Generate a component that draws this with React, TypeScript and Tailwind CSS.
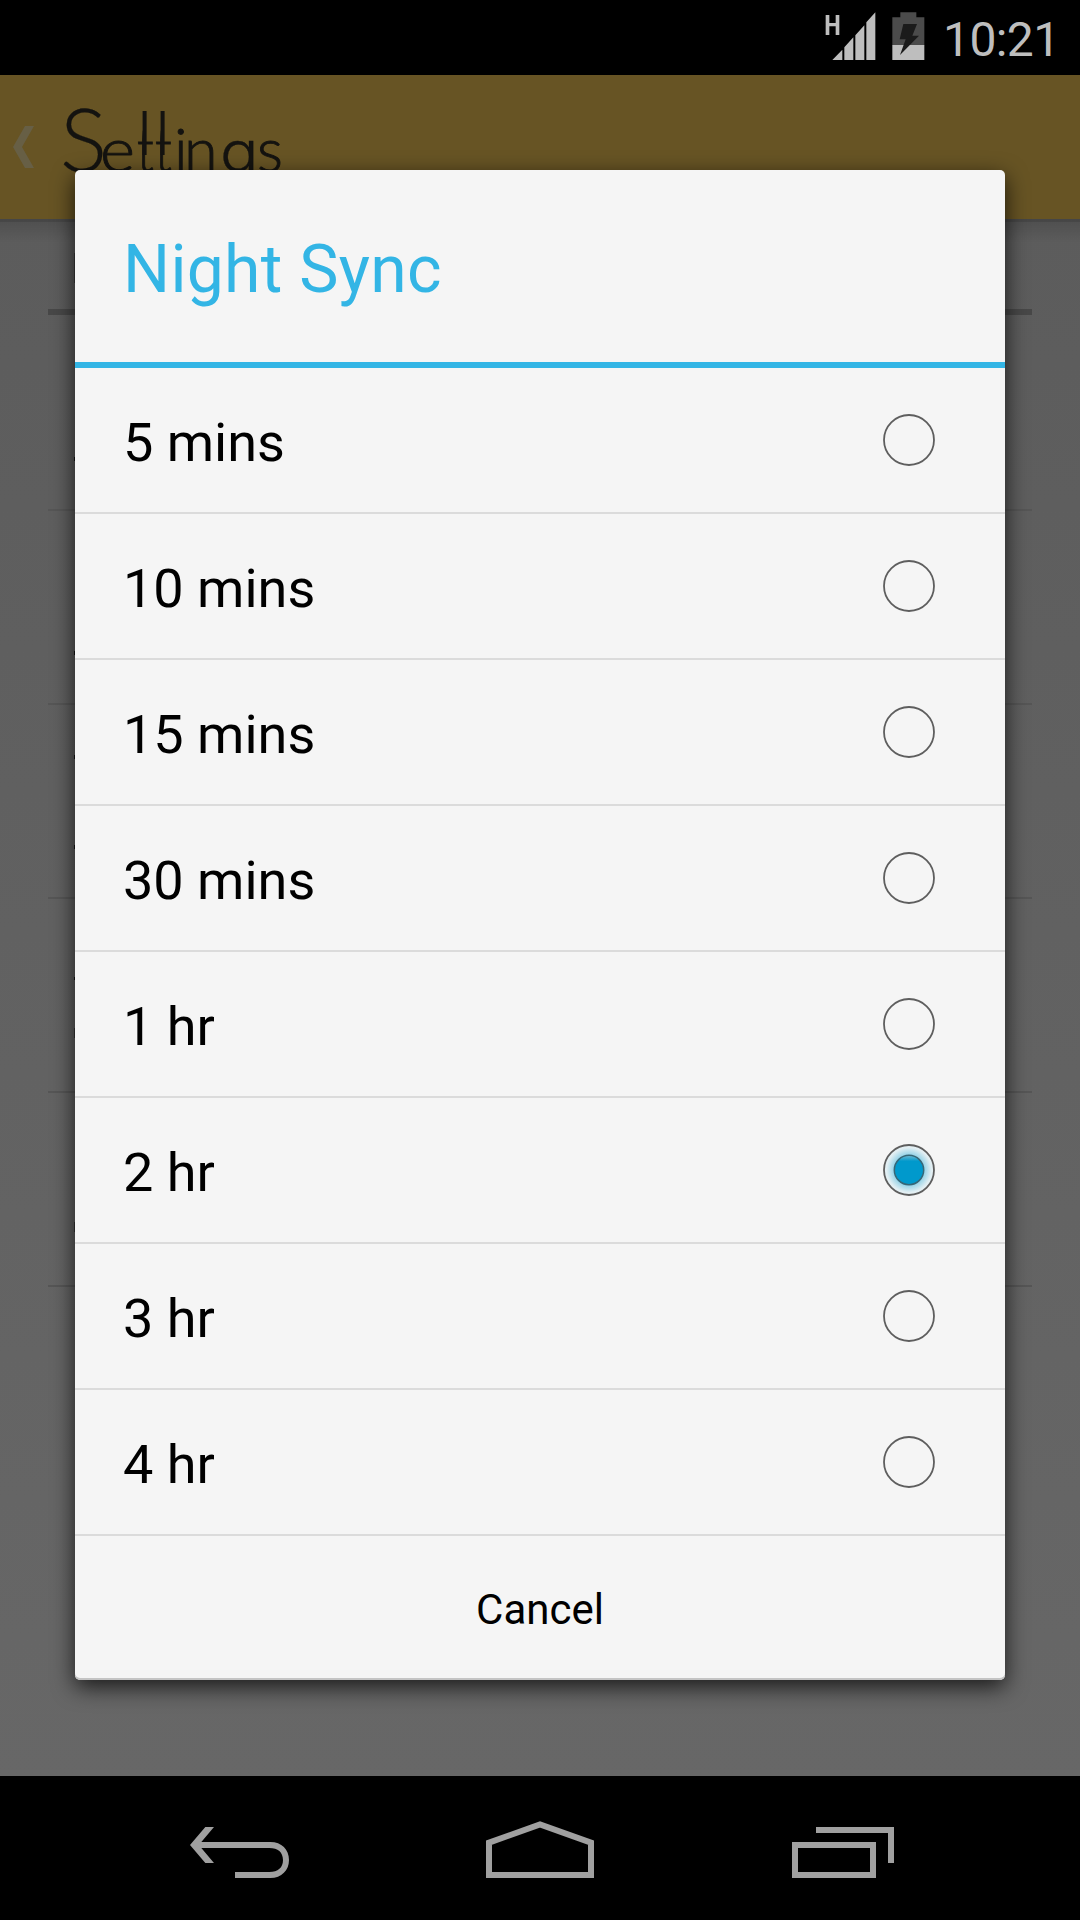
import React, { useState } from 'react';
import clsx from 'clsx';

const options = ['5 mins', '10 mins', '15 mins', '30 mins', '1 hr', '2 hr', '3 hr', '4 hr'];

function StatusBar() {
  return (
    <header className="flex h-[75px] justify-end bg-black pr-[23px] text-[#bebebe]">
      <svg className="h-[75px] w-[100px]" viewBox="134 0 300 225" fill="currentColor">
        <path d="M136 45h11v24h19V45h11v60h-11V79h-19v26h-11z" />
        <path d="M156 180 186 149V180zM192 142 219 112V180H192zM225 106 252 76V180H225zM258 67 285 37V180H258z" />
        <path fill="#4b4b4b" d="M360 37h48v15h24v84h-96V52h24z" />
        <path d="M336 135h96v45h-96z" />
        <path fill="#1b1b1b" d="M369 72h41l-14 35h20l-57 58 17-47h-18z" />
      </svg>
      <div className="ml-[18px] w-[114px] pr-px text-right text-[48px] leading-[79px] tracking-[-0.6px] whitespace-nowrap">10:21</div>
    </header>
  );
}

function TallT({ className }: { className: string }) {
  return (
    <span className={clsx('relative origin-left scale-x-80', className)}>
      t
      <i className="absolute top-[22px] left-[6.5px] h-[44px] w-[5.5px] bg-[#141310]" />
    </span>
  );
}

function ActionBar() {
  return (
    <div className="flex h-[144px] bg-[#675424]">
      <svg className="mt-[51px] ml-[13px] h-[42px] w-[21px]" viewBox="0 0 21 42">
        <path d="M12 0h9L9 21l12 21h-9L0 21z" fill="#675f45" />
      </svg>
      <h1 className="ml-[26px] flex h-[120px] items-baseline pt-[3px] text-[61px] leading-[120px] font-light text-[#141310] [font-family:Lato,sans-serif] [-webkit-text-stroke:0.9px_#141310]">
        <span className="w-[40px] text-[88px] tracking-[-9px] [-webkit-text-stroke:0.3px_#141310]">S</span>
        <span className="w-[37px] origin-left scale-x-110">e</span>
        <TallT className="w-[18px]" />
        <TallT className="w-[19px]" />
        <span className="w-[10px]">i</span>
        <span className="w-[36px]">n</span>
        <span className="w-[37px] origin-left scale-x-112 text-[57px] [font-family:Inter,sans-serif] [-webkit-text-stroke:0.3px_#141310]">g</span>
        <span>s</span>
      </h1>
    </div>
  );
}

// slivers of the preference labels that stick out past the dialog's left edge
function Sliver({ className }: { className: string }) {
  return <i className={clsx('absolute left-[74px] w-px', className)} />;
}

function Preferences() {
  return (
    <div className="relative flex-1 bg-linear-to-b from-[#5c5c5c] to-[#676767] px-[48px]">
      <div className="absolute inset-x-0 top-0 h-[24px] bg-linear-to-b from-black/15 to-transparent" />
      <div className="absolute inset-x-0 top-0 h-[3px] bg-black/10" />
      <div className="mb-[2px] h-[96px] border-b-[6px] border-[#484848]" />
      {[0, 1, 2, 3, 4].map((n) => (
        <div key={n} className="h-[194px] border-b-2 border-[#565656]" />
      ))}
      <Sliver className="top-[34px] h-[30px] bg-[#3c3c3c]" />
      <Sliver className="top-[238px] h-[4px] bg-[#151515]" />
      <Sliver className="top-[432px] h-[4px] bg-[#151515]" />
      <Sliver className="top-[536px] h-[4px] bg-[#151515]" />
      <Sliver className="top-[626px] h-[4px] bg-[#151515]" />
      <Sliver className="top-[758px] h-[3px] bg-[#151515]" />
      <Sliver className="top-[809px] h-[10px] bg-[#383838]" />
      <Sliver className="top-[1003px] h-[10px] bg-[#383838]" />
    </div>
  );
}

function Radio({ checked }: { checked: boolean }) {
  return (
    <svg className="h-[52px] w-[52px]" viewBox="0 0 52 52">
      <defs>
        <radialGradient id="glow">
          <stop offset="0.58" stopColor="#8fd0e6" />
          <stop offset="0.9" stopColor="#e3eff3" />
        </radialGradient>
        <linearGradient id="dot" x2="0" y2="1">
          <stop offset="0" stopColor="#6fb9d2" />
          <stop offset="0.2" stopColor="#0099cc" />
        </linearGradient>
      </defs>
      <circle cx="26" cy="26" r="25" fill={checked ? 'url(#glow)' : 'none'} stroke="#5e5e5e" strokeWidth="1.8" />
      {checked && <circle cx="26" cy="26" r="14.7" fill="url(#dot)" stroke="#376777" strokeWidth="1.5" />}
    </svg>
  );
}

function NavBar() {
  return (
    <nav className="flex h-[144px] bg-black pl-[190px]">
      <svg className="h-[144px] w-[99px]" viewBox="90 0 297 432">
        <path fill="#a0a0a0" d="M136 153h26l-38 45h207c34 0 56 23 56 54s-22 54-56 54H225v-18h103c26 0 41-13 41-36s-15-36-41-36H124l38 45h-26l-46-54z" />
      </svg>
      <svg className="ml-[197px] h-[144px] w-[108px]" viewBox="978 0 324 432">
        <path fill="none" stroke="#a0a0a0" strokeWidth="18" d="M987 297V200l153-55 153 55v97z" />
      </svg>
      <svg className="ml-[198px] h-[144px] w-[102px]" viewBox="156 0 306 432">
        <path fill="none" stroke="#a0a0a0" strokeWidth="18" d="M165 207h234v90H165zM228 162h225v99" />
      </svg>
    </nav>
  );
}

export default function App() {
  const [selected, setSelected] = useState('2 hr');

  return (
    <div className="relative flex h-[1920px] w-[1080px] flex-col overflow-hidden bg-black [font-family:Roboto,sans-serif]">
      <StatusBar />
      <ActionBar />
      <Preferences />
      <NavBar />

      {/* dialog */}
      <div className="absolute top-[170px] left-[75px] w-[930px] overflow-hidden rounded-[5px] bg-[#f5f5f5] text-black shadow-[0_7px_22px_rgba(0,0,0,0.75),inset_0_-2px_0_#c4c4c4]">
        <h2 className="h-[198px] border-b-[6px] border-[#33b5e5] pt-[4px] pl-[48px] text-[66px] leading-[192px] tracking-[0.3px] text-[#33b5e5]">
          Night Sync
        </h2>
        {options.map((option) => (
          <button
            key={option}
            onClick={() => setSelected(option)}
            className="flex h-[146px] w-full items-center justify-between border-b-2 border-[#dbdbdb] pr-[70px] pl-[48px] text-left"
          >
            <span className="pt-[4px] text-[54px]">{option}</span>
            <Radio checked={option === selected} />
          </button>
        ))}
        <button className="h-[144px] w-full pt-[3px] text-[42px]">Cancel</button>
      </div>
    </div>
  );
}
